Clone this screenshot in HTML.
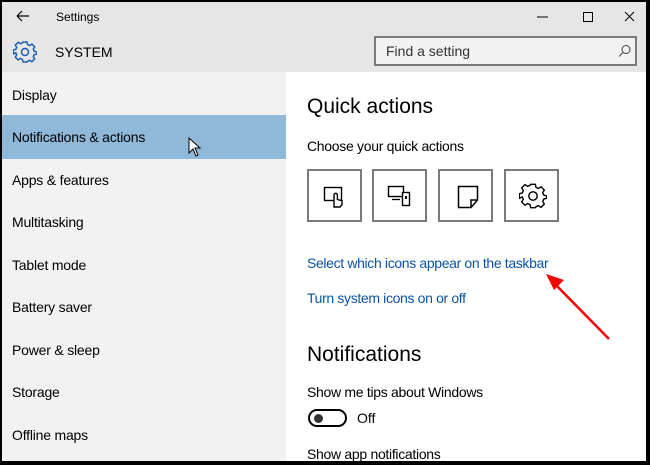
<!DOCTYPE html>
<html><head><meta charset="utf-8"><style>
*{margin:0;padding:0;box-sizing:border-box}
body{width:650px;height:465px;background:#000;position:relative;overflow:hidden;font-family:"Liberation Sans",sans-serif;color:#000}
.win{position:absolute;left:2px;top:2px;width:644px;height:459px;background:#fff;overflow:hidden}
.title{position:absolute;left:0;top:0;width:644px;height:70px;background:#e6e6e6}
.side{position:absolute;left:0;top:70px;width:284px;height:400px;background:#f2f2f2}
.t{position:absolute;white-space:nowrap}
.item{position:absolute;left:10px;font-size:14px;letter-spacing:-0.2px}
.sel{position:absolute;left:0;top:113px;width:284px;height:44px;background:#90b8d9}
.box{position:absolute;top:167px;width:55px;height:53px;border:2px solid #7a7a7a;background:#fff}
.link{color:#0a54a8;font-size:14px;letter-spacing:-0.35px}
</style></head><body>
<div class="win">
<div class="title"></div>
<svg class="t" style="left:14px;top:8px" width="14" height="12"><path d="M1 6H13M1 6L6 1M1 6L6 11" stroke="#000" stroke-width="1.2" fill="none"/></svg>
<div class="t" style="left:54px;top:8px;font-size:12px">Settings</div>
<svg class="t" style="left:534px;top:7px" width="100" height="16"><path d="M1 8H12" stroke="#000"/><rect x="47.5" y="3.5" width="9" height="9" fill="none" stroke="#000"/><path d="M89 3L98 12M98 3L89 12" stroke="#000"/></svg>
<svg class="t" style="left:11px;top:38px" width="24" height="24" viewBox="0 0 24 24"><path d="M10 2h4l.6 2.6 2 .9 2.3-1.4 2.8 2.8-1.4 2.3.9 2L23.8 12v0l0 2-2.6.6-.9 2 1.4 2.3-2.8 2.8-2.3-1.4-2 .9L14 22h-4l-.6-2.6-2-.9-2.3 1.4-2.8-2.8 1.4-2.3-.9-2L.2 14v-4l2.6-.6.9-2L2.3 5.1 5.1 2.3l2.3 1.4 2-.9z" fill="none" stroke="#1a5fb4" stroke-width="1.5"/><circle cx="12" cy="12" r="3.5" fill="none" stroke="#1a5fb4" stroke-width="1.5"/></svg>
<div class="t" style="left:53px;top:42px;font-size:14px">SYSTEM</div>
<div class="t" style="left:372px;top:34px;width:263px;height:30px;border:2px solid #7a7a7a;background:#f2f2f2"></div>
<div class="t" style="left:384px;top:41px;font-size:14px;color:#333">Find a setting</div>
<svg class="t" style="left:616px;top:42px" width="14" height="14"><circle cx="8" cy="5.5" r="4" fill="none" stroke="#444"/><path d="M5 8.5L1 12.5" stroke="#444"/></svg>
<div class="side"></div>
<div class="sel"></div>
<div class="item t" style="top:85px">Display</div>
<div class="item t" style="top:127px">Notifications &amp; actions</div>
<div class="item t" style="top:170px">Apps &amp; features</div>
<div class="item t" style="top:212px">Multitasking</div>
<div class="item t" style="top:255px">Tablet mode</div>
<div class="item t" style="top:297px">Battery saver</div>
<div class="item t" style="top:340px">Power &amp; sleep</div>
<div class="item t" style="top:382px">Storage</div>
<div class="item t" style="top:425px">Offline maps</div>
<svg class="t" style="left:186px;top:135px" width="16" height="22"><path d="M1 1V16L5 12L8 19L10 18L7 11H12Z" fill="#fff" stroke="#000"/></svg>
<div class="t" style="left:305px;top:93px;font-size:21px">Quick actions</div>
<div class="t" style="left:305px;top:136px;font-size:14px;letter-spacing:-0.3px">Choose your quick actions</div>
<div class="box" style="left:305px"></div><div class="box" style="left:370px"></div><div class="box" style="left:436px"></div><div class="box" style="left:502px"></div>
<svg class="t" style="left:320px;top:181px" width="26" height="28"><rect x="2.5" y="4.5" width="17" height="13" fill="none" stroke="#000" stroke-width="1.4"/><path d="M12 24V12a1.7 1.7 0 0 1 3.4 0v4.5l4.6 1.2v4l-2 2.3h-6z" fill="#fff" stroke="#000" stroke-width="1.4"/></svg>
<svg class="t" style="left:385px;top:181px" width="30" height="28"><rect x="1.5" y="3.5" width="15" height="10" fill="none" stroke="#000" stroke-width="1.4"/><path d="M5 16.5H13" stroke="#000" stroke-width="1.3"/><rect x="15.5" y="9.5" width="7" height="13" fill="#fff" stroke="#000" stroke-width="1.4"/><rect x="18" y="13" width="2" height="3" fill="#000"/></svg>
<svg class="t" style="left:452px;top:181px" width="28" height="28"><path d="M4.5 3.5H23.5V17L17 24.5H4.5Z M17 24.5V17H23.5" fill="none" stroke="#000" stroke-width="1.5"/></svg>
<svg class="t" style="left:517px;top:180px" width="28" height="28" viewBox="0 0 24 24"><path d="M10 2h4l.6 2.6 2 .9 2.3-1.4 2.8 2.8-1.4 2.3.9 2L23.8 12v0l0 2-2.6.6-.9 2 1.4 2.3-2.8 2.8-2.3-1.4-2 .9L14 22h-4l-.6-2.6-2-.9-2.3 1.4-2.8-2.8 1.4-2.3-.9-2L.2 14v-4l2.6-.6.9-2L2.3 5.1 5.1 2.3l2.3 1.4 2-.9z" fill="none" stroke="#000" stroke-width="1.2"/><circle cx="12" cy="12" r="3.6" fill="none" stroke="#000" stroke-width="1.2"/></svg>
<div class="t link" style="left:305px;top:253px">Select which icons appear on the taskbar</div>
<div class="t link" style="left:305px;top:288px">Turn system icons on or off</div>
<svg class="t" style="left:540px;top:266px" width="80" height="80"><path d="M67 71L10 13" stroke="#f00" stroke-width="2.5"/><path d="M4 6L22 12L12 22Z" fill="#f00"/></svg>
<div class="t" style="left:305px;top:341px;font-size:21px">Notifications</div>
<div class="t" style="left:305px;top:382px;font-size:14px;letter-spacing:-0.3px">Show me tips about Windows</div>
<div class="t" style="left:306px;top:407px;width:39px;height:18px;border:2px solid #000;border-radius:9px"></div>
<div class="t" style="left:312px;top:412px;width:9px;height:9px;border-radius:50%;background:#333"></div>
<div class="t" style="left:355px;top:408px;font-size:14px">Off</div>
<div class="t" style="left:305px;top:444px;font-size:14px;letter-spacing:-0.3px">Show app notifications</div>
</div>
</body></html>
